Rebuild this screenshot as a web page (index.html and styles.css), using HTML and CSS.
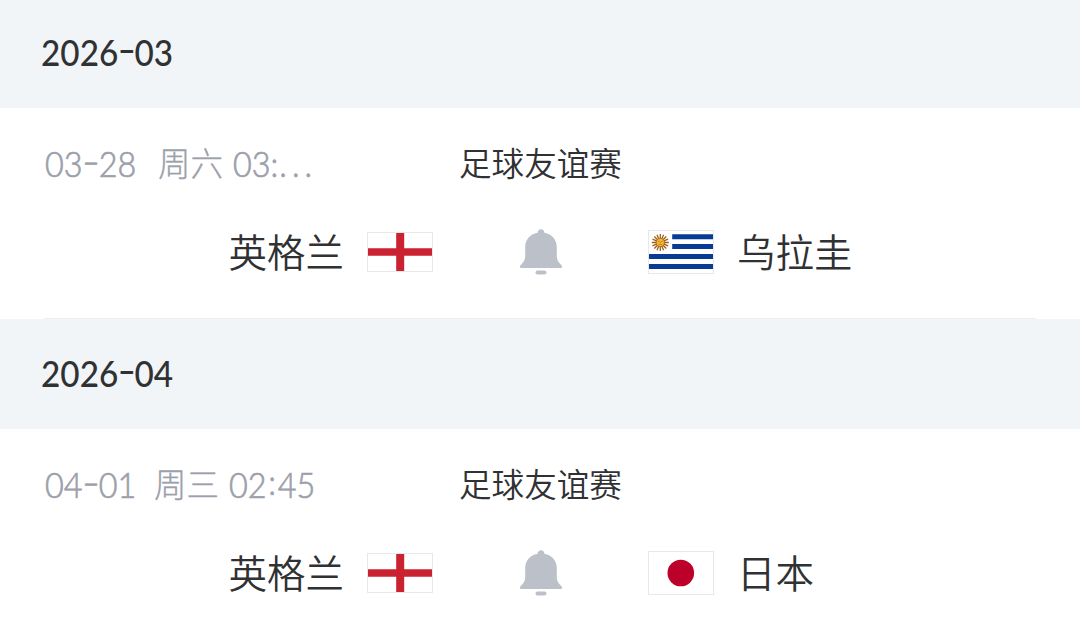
FILE: index.html
```
<!DOCTYPE html>
<html lang="zh-CN">
<head>
<meta charset="utf-8">
<title>赛程</title>
<link rel="stylesheet" href="styles.css">
</head>
<body>
<svg class="defs" width="0" height="0" aria-hidden="true">
  <symbol id="bell" viewBox="0 0 44 48">
    <path d="M22 1.200c-2.100 0-3.300 1.400-3.400 3.500C10.900 6.200 6.200 11.600 6.200 19v9.500c0 3.300-1.500 5.600-4 8-2.200 2.200-1.500 3.500.7 3.500h38.200c2.200 0 2.900-1.300.7-3.500-2.500-2.400-4-4.700-4-8V19c0-7.400-4.700-12.800-12.400-14.300-.1-2.100-1.300-3.500-3.400-3.500z"/>
    <rect x="16.500" y="42.400" width="11" height="4.200" rx="2.100"/>
  </symbol>
  <symbol id="england" viewBox="0 0 64 38">
    <path fill="#fff" d="M0 0h64v38H0z"/>
    <path fill="#cb2231" d="M28.200 0h8v38h-8zM0 15.200h64v7.500H0z"/>
  </symbol>
</svg>
<main class="schedule">
  <section>
    <h2 class="month month-first"><span class="num">2026<span class="dash">-</span>03</span></h2>
    <article class="match">
      <div class="info">
        <div class="date"><span class="day"><span class="num">03<span class="dash">-</span>28</span></span><span class="week">周六</span><span class="num">03:<span class="dots">...</span></span></div>
        <div class="league">足球友谊赛</div>
      </div>
      <div class="teams">
        <div class="team home"><span>英格兰</span><svg class="flag flag-england"><use href="#england"/></svg></div>
        <svg class="bell"><use href="#bell"/></svg>
        <div class="team away">
          <svg class="flag" viewBox="0 0 64 42">
            <path fill="#fff" d="M0 0h64v42H0z"/>
            <path fill="#083b93" d="M23.200 3.300H64v5H23.200zM23.200 13H64v5H23.200zM0 23h64v5H0zM0 33h64v5H0z"/>
            <g stroke="#9b6118" stroke-width="1.300" fill="none">
              <path d="M11.300 3v17M2.800 11.500h17M5.300 5.500l12 12M17.300 5.500l-12 12M8 3.700l6.600 15.600M14.600 3.700L8 19.300M3.500 8.200l15.600 6.600M19.100 8.200L3.500 14.800"/>
            </g>
            <circle cx="11.300" cy="11.500" r="4.200" fill="#f5b431" stroke="#a5641c" stroke-width=".8"/>
            <path d="M9 10.500h1.500M12.200 10.500h1.500M11.300 11v1.500M9.800 13.600h3" stroke="#b87520" stroke-width=".7"/>
          </svg>
          <span>乌拉圭</span>
        </div>
      </div>
    </article>
  </section>
  <section>
    <h2 class="month"><span class="num">2026<span class="dash">-</span>04</span></h2>
    <article class="match match-last">
      <div class="info">
        <div class="date"><span class="day day-short"><span class="num">04<span class="dash">-</span>01</span></span><span class="week">周三</span><span class="num">02<span class="colon">:</span>45</span></div>
        <div class="league">足球友谊赛</div>
      </div>
      <div class="teams">
        <div class="team home"><span>英格兰</span><svg class="flag flag-england"><use href="#england"/></svg></div>
        <svg class="bell"><use href="#bell"/></svg>
        <div class="team away">
          <svg class="flag" viewBox="0 0 64 42"><path fill="#fff" d="M0 0h64v42H0z"/><circle cx="31.800" cy="21" r="13.300" fill="#bd0029"/></svg>
          <span>日本</span>
        </div>
      </div>
    </article>
  </section>
</main>
</body>
</html>
```
FILE: styles.css
```
* { box-sizing: border-box; }

body {
  margin: 0;
  background: #fff;
  color: #303133;
  font-family: Lato, "Noto Sans CJK SC", sans-serif;
}

.defs { display: block; height: 0; }

.schedule { height: 623px; overflow: hidden; }

.month {
  display: flex;
  align-items: center;
  height: 110px;
  margin: 0;
  padding-left: 41px;
  background: #f2f5f8;
  font-size: 36px;
  font-weight: 500;
  line-height: 44px;
}

.month-first { height: 108px; padding-bottom: 2px; }

.num {
  display: inline-block;
  white-space: nowrap;
  transform: translateY(-1px) scaleX(0.925);
  transform-origin: left;
}

.dash {
  display: inline-block;
  width: 17.500px;
  text-align: center;
  transform: translateY(-3px) scaleX(1.500);
}

.colon {
  display: inline-block;
  width: 12px;
  text-align: center;
  transform: translateY(-3px);
}

.match { height: 211px; padding: 32px 44px 0; position: relative; }

.match::after {
  content: "";
  position: absolute;
  right: 44px;
  bottom: 0;
  left: 44px;
  height: 1px;
  background: #ebedef;
}

.match-last::after { display: none; }

.info {
  display: grid;
  grid-template-columns: 415px 1fr;
  align-items: center;
  height: 48px;
}

.date {
  display: flex;
  align-items: center;
  padding-left: 1px;
  color: #9ba0aa;
  font-size: 35px;
  font-weight: 300;
  line-height: 48px;
}

.date .num { -webkit-text-stroke: 0.7px currentColor; }

.day { width: 113px; }
.day-short { width: 109px; }
.week {
  width: 75px;
  font-size: 32.500px;
  -webkit-text-stroke: 0.3px currentColor;
}
.dots { margin-left: 1px; letter-spacing: 5.500px; }

.league { font-size: 32.600px; font-weight: 350; line-height: 48px; }

.teams {
  display: grid;
  grid-template-columns: 389px 1fr 388px;
  align-items: center;
  height: 48px;
  margin-top: 40px;
}

.team {
  display: flex;
  align-items: center;
  font-size: 38.500px;
  font-weight: 350;
  line-height: 48px;
  white-space: nowrap;
}

.home { justify-content: flex-end; gap: 23px; }
.away { gap: 23px; }

.flag {
  flex: none;
  width: 66px;
  height: 44px;
  border: 1px solid #e8e8e8;
}

.flag-england { height: 40px; }

.bell {
  justify-self: center;
  width: 44px;
  height: 48px;
  fill: #bbc0c9;
}
```
